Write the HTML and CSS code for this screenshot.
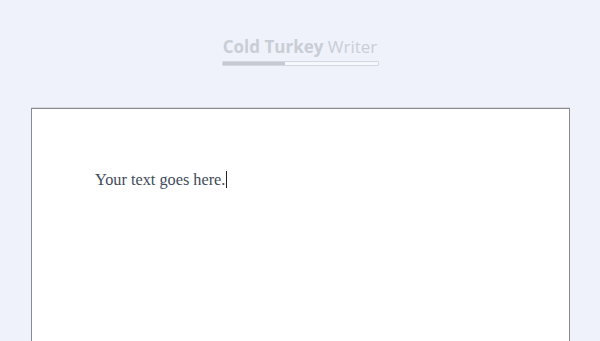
FILE: index.html
```html
<!DOCTYPE html>
<html lang="en">
<head>
  <meta charset="UTF-8" />
  <meta name="viewport" content="width=device-width, initial-scale=1.0"/>
  <title>Cold Turkey Writer</title>
  <link rel="stylesheet" href="styles.css">
</head>
<body>
<div class="header">
  <h1 class="title"><b>Cold Turkey</b> Writer</h1>
  <div class="progress"><div class="progress-fill"></div></div>
</div>

<div class="paper">
  <p class="text">Your text goes here.<span class="caret"></span></p>
</div>
</body>
</html>
```

FILE: styles.css
```css
body {
  margin: 0;
  background-color: #eff2fa;
  font-family: "Open Sans", sans-serif;
  height: 341px;
  overflow: hidden;
}
.header {
  display: flex;
  flex-direction: column;
  align-items: center;
  padding-top: 36px;
}
.title {
  margin: 0;
  font-size: 17px;
  font-weight: 400;
  line-height: 22px;
  color: #c9cdd6;
}
.title b {
  font-weight: 700;
}
.progress {
  margin-top: 3px;
  width: 155px;
  height: 3px;
  border: 1px solid #d3d7e0;
  border-radius: 1px;
  background-color: #f6f8fc;
}
.progress-fill {
  width: 40%;
  height: 100%;
  background-color: #c6c9d2;
}
.paper {
  margin: 42px 0 0 31px;
  width: 539px;
  height: 240px;
  box-sizing: border-box;
  padding: 59px 0 0 63px;
  background-color: #fff;
  border: 1px solid #8a8a8a;
  border-bottom: none;
  box-shadow: 0 -1px 0 #d8dbe2;
}
.text {
  margin: 0;
  font-family: "Liberation Serif", serif;
  font-size: 16.3px;
  line-height: 24px;
  color: #414b5a;
}
.caret {
  display: inline-block;
  width: 1px;
  height: 17px;
  margin-left: 1px;
  vertical-align: -3px;
  background-color: #222;
}
```
